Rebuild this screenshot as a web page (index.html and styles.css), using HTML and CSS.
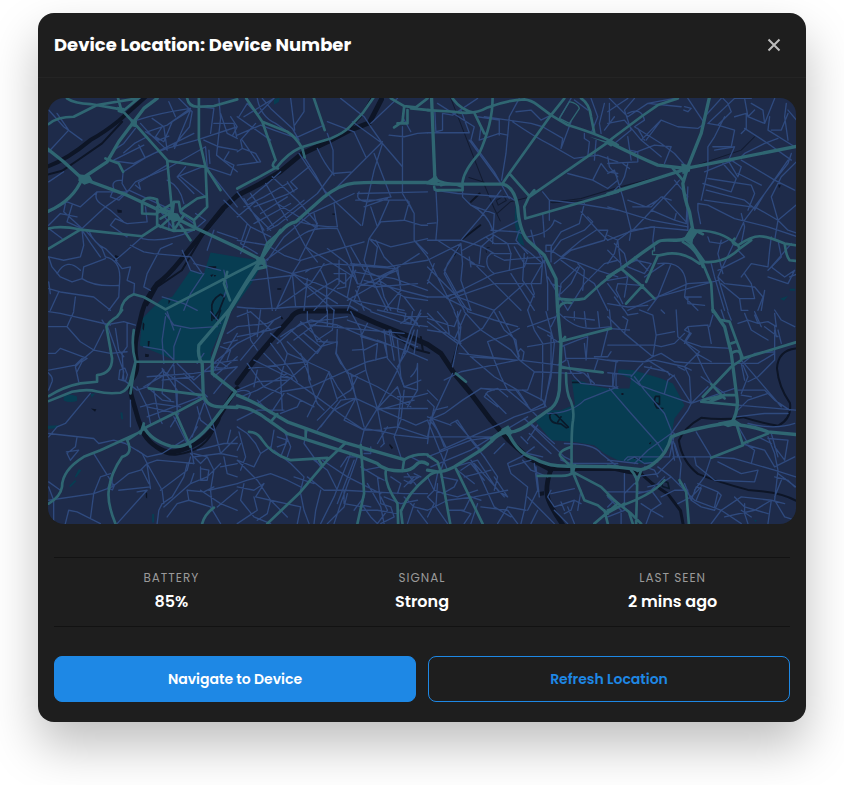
FILE: index.html
```html
<!DOCTYPE html>
<html lang="en">
<head>
<meta charset="utf-8">
<meta name="viewport" content="width=device-width, initial-scale=1">
<title>Device Location</title>
<link rel="stylesheet" href="styles.css">
</head>
<body>
<main class="modal" role="dialog" aria-labelledby="modal-title">
  <header class="modal-header">
    <h1 class="modal-title" id="modal-title">Device Location: Device Number</h1>
    <button class="close" type="button" aria-label="Close">
      <svg viewBox="0 0 16 16" aria-hidden="true"><path d="M2.5 2.5l11 11M13.5 2.5l-11 11"/></svg>
    </button>
  </header>
  <div class="map">
    <svg viewBox="3 3 2241 1278" preserveAspectRatio="xMidYMid slice" role="img" aria-label="Map">
      <!-- Parks -->
      <g class="park">
        <path d="M490 467L570 480 650 492 612 560 555 640 520 700 490 770 494 795 380 788 278 745 285 665 310 639 345 605 375 600 430 520 470 530Z"/>
        <path d="M1572 848L1610 855 1625 864 1680 874H1745L1750 844 1710 829 1712 817 1755 819 1840 844 1875 859 1910 924 1880 964 1870 1019 1860 1059 1830 1089 1800 1101 1710 1089 1670 1069 1640 1044 1575 1034 1510 1029 1465 974 1480 959 1510 939 1540 939 1582 922Z"/>
        <path d="M50 898q20-10 40 0v14q-24 6-40-2zM0 986l42-2-20 10-22 2zM95 1115l8 4-16 22-4-2zM84 1148l4 4-18 18-4-4zM220 946l6 0 2 22-6-4zM680 8l18-6-4 14-14 8zM2196 605l24-8-12 14zM2225 575h16v6h-16zM315 1250h6v26h-6zM130 890l14 0-10 12zM2117 1266l10 4-4 6zM1403 318l8 60 20 70-18-10-12-60z"/>
      </g>
      <!-- Rivers -->
      <g class="river">
        <path class="w14" d="M296 0L215 72Q170 108 130 130 60 188 0 210"/>
        <path class="w8" d="M225 75L165 140 90 192 45 222 0 234"/>
        <path class="w20" d="M1002 8L966 78 908 100 842 134 762 172 697 226 633 264 570 296 528 334 484 388"/>
        <path class="w16" d="M484 388Q440 440 400 490T330 560Q295 605 285 645T268 720 268 790 252 850Q248 880 254 900T274 969L290 1010Q305 1035 330 1050 350 1064 372 1064T430 1048 490 1002 515 959L555 894 570 874"/>
        <path class="w8" d="M530 340L470 410 404 520 330 570 300 625M290 1000Q330 1080 390 1072 480 1060 504 985M972 5L940 60 905 96"/>
        <path class="w20" d="M570 858L622 788 680 719 730 664Q740 646 762 642H905L985 678 1070 712 1140 742 1180 769 1220 829 1270 889 1330 969 1380 1026 1440 1080 1510 1118"/>
        <path class="w14" d="M1510 1115H1700L1740 1124 1780 1130"/>
        <path class="w8" d="M1025 690L1060 728 1100 756 1145 768M1120 720l6 40"/>
        <path class="w12" d="M1780 1130L1812 1158 1860 1190 1898 1240 1906 1282"/>
        <path class="w16" d="M1508 1122Q1495 1160 1498 1190T1545 1282"/>
        <path class="w6" d="M2243 754Q2190 760 2187 814 2192 870 2226 918 2232 965 2190 986 2130 975 2085 960 2030 970 1960 962 1910 990 1893 1030 1902 1092 1950 1130 2010 1154 2100 1178 2200 1184 2243 1210"/>
        <path class="w8" d="M1270 315L1296 290M1240 430L1298 385M1236 445L1220 475M1230 745L1214 800"/>
      </g>
      <g class="rail">
        <path d="M1210 5L1308 258 1340 335 1358 372M1264 242l46 14M1348 350l40-35 50-12M1346 311l22-14 8 14-24 14zM1510 317L1600 305 1710 272 1880 228 2080 160 2120 120M1515 318L1620 310 1712 280M1325 452q-14 0-8 14"/>
        <path class="pond" d="M494 636Q490 610 520 592L532 600 516 640 500 665ZM520 640l-10 30M494 640v30"/>
        <path class="pond" d="M1506 955Q1512 940 1528 955L1562 990 1556 992 1540 980Q1506 980 1506 955ZM1530 975l10-16"/>
        <path class="pond" d="M1835 898h-12q-8 18 4 34l18 2M1835 898v24l-12-6M1575 856h20M1760 1082l20 4"/>
        <path class="pond" d="M1840 1150l20 6 4 18-20-6z"/>
      </g>
      <g class="ink"><path d="M210 338l14 2 0 8-12 0zM205 474l14 6-8 10-12-2zM483 508h24v6h-24zM489 534l10-2-6 8zM499 534l8 0-4 6zM364 608l6 4-6 10zM287 675l5 6-2 20-4-6zM294 770l12 2-2 8-10 0zM132 934l16 2-4 8zM302 732l6 0-2 16-4 0zM296 1184l4 4 0 16-4-4zM1473 1184l16-2v12l-14 2zM1027 1040l10 12-4 4-8-12zM2191 264l8 2-6 8zM1803 1038l8-4-4 8zM1721 888l6 0v6h-6zM690 574l12 0v4h-12zM855 350h8v4h-8zM700 656l8 8-4 4-6-8z"/></g>
      <!-- Streets -->
      <g class="street">
        <!-- north west -->
        <path d="M5 40L50 90 105 130M30 50L65 100 5 165M265 95L230 140 200 160M300 120L262 140 230 168M280 80L315 118 360 160M295 105L335 130 365 118M270 70Q330 50 430 35L360 85 300 105M345 90L325 120 350 135 375 75 430 40 382 155M395 5l40 40-8 45-50 60M365 15L385 60M315 65L350 90 360 160M200 190L290 145M180 190L260 200 320 170 360 155 455 128 570 90M275 145l18 36M470 130L515 150 570 160M490 110L500 35 455 30M520 50L540 110 570 125M550 60l20 30-14 26M515 5l5 60-12 110 62 50M228 225L300 180 440 110M228 225L225 260 240 285M5 255L50 225M225 250Q190 250 200 275L190 300 215 310 245 280 265 255 360 215 475 150 480 210"/>
        <path d="M240 285L150 285Q140 305 160 320L190 340 230 375M265 265l15 12-6-20 90-55M5 345L60 315 100 330 150 285M55 320L50 345 105 395M75 325L60 375 105 395 175 330 245 280 375 340M5 385L40 350 90 360M5 395L45 425M105 400L110 445 100 480 50 490 5 480M105 400Q130 440 160 480M115 400L165 455 175 480M125 400Q140 440 175 455L210 490M295 330L300 375 240 380 205 365 190 385 240 420M285 420L240 460 205 490 225 515 250 510 240 550 262 560 260 590M250 445L290 465 320 470 430 480 465 530M285 425Q350 440 440 400M375 440L340 455 300 530 290 570 310 580"/>
        <path d="M175 480Q220 490 218 545L215 600 185 640M175 485L110 510 105 545Q140 570 215 565M5 480L15 510 40 540 75 555 105 545M30 530Q60 480 100 520M5 575L40 585 140 600 190 640M85 600L80 640M35 585L10 640M5 555L10 590M465 210L390 240 440 290M390 240L415 210M400 240L475 300M360 250Q400 270 410 320M475 210L550 235 560 205 530 190 545 165M475 210L570 330M485 160L488 200M500 80l60 0 8 40M440 380L400 350 415 325M445 350L475 370 440 400M530 310L570 350M500 400L480 460M510 405L570 425"/>
        <path d="M330 330L375 390M350 330L400 370M365 375L365 400M405 460L430 520 460 530M520 520L440 500M530 520L540 570 530 600M470 530L430 590 410 640M345 600L410 620 450 640"/>
        <!-- north centre -->
        <g transform="translate(570 0)">
        <path d="M5 60L30 20 60 55 110 5M75 5L100 35 165 95 185 130M60 5Q70 60 115 80L180 125M160 5L172 100M200 5V45L172 85M0 115L70 85 110 100 180 125M55 80L10 130 15 155 0 165M0 205L70 195 55 170 15 155M0 60L100 130M15 130L60 195M110 5L20 60M310 5L380 60 400 90 435 140 495 210M345 75L435 140M400 80L480 5M435 140L410 220 385 330 375 385M350 105L385 180M270 75L350 105M410 170L460 300M435 135L285 285M240 155Q260 200 290 235M270 110L287 160V230L345 225M260 85L172 125M185 170L215 215 265 285 300 320 370 385M200 180L235 235 265 290M215 210L160 255 180 275 155 290 50 330M150 255L170 285"/>
        <path d="M30 310L85 265 130 225M0 285L40 340 100 400M0 360L60 310M20 305L80 400M40 290L110 390M85 260L150 370M105 240L180 310M70 350L150 300M50 380L160 320M20 330L80 300 150 260M90 395L200 310M90 400L120 385 240 290 285 230M0 350L40 390 100 420M0 430L90 445 140 475 185 490M30 380L10 440 60 470M60 360L90 440M40 390L10 470M120 320L240 395M180 310L240 380M170 385L205 450 240 495M185 375Q240 390 300 390L290 320"/>
        <path d="M85 490L140 450 200 410Q230 390 300 395L320 440 340 490 360 560M360 290L570 285M365 285Q350 310 390 315L460 300M355 310L510 310 530 350V430L570 480M380 330L450 305M495 90V290L530 350M455 115L500 120 540 110 570 108M495 60L520 105M400 330L420 390 455 310M350 290L220 350 140 420 90 490M395 425L430 375 500 370 550 385 570 385M500 370L515 315M395 425L460 450 570 425M395 425L380 490 410 560 450 640M415 430L440 480 475 515 490 560M530 430L570 470M380 435L290 460 190 490M400 430L420 450 410 510"/>
        <path d="M70 500L165 530 290 580 400 640M85 490L105 640M190 490L165 530 115 640M185 490L240 380M165 530L175 630M165 530L290 640M210 545L200 640M240 390L230 350M165 530L280 500 475 515M250 520L268 560V640M305 490V560M40 550L170 535M205 450L350 540M210 600L300 545 320 560 355 520M230 640L305 560M290 530L325 530V570L300 575M270 455L330 500 360 560 420 570M340 450L380 520 425 540 475 515 545 470M350 525L470 545 570 580M340 500L450 510 570 490M360 570L480 520M475 515L400 570 330 610M480 510L490 580 440 640M425 540L440 600 460 640M425 550L500 600 570 610M380 550L570 600M500 600L530 640M490 590L480 640M355 580L380 640M0 630Q80 640 160 630L335 625 360 640M205 560L300 620M220 515L205 525M120 630L220 560 260 500M345 600L330 640M350 500L330 600M390 510L350 610 500 640M410 570L540 560"/>
        </g>
        <!-- north east of centre -->
        <g transform="translate(1140 0)">
        <path d="M0 108H125L100 40M22 45L25 105 45 100V50L75 55 150 5M30 20L140 90 130 130 200 225 245 305M125 130L220 260M160 90L155 130 215 110 240 115 235 170 222 250M150 60L215 70V115M170 60L310 80 345 90 405 125 400 155 430 75M240 120L245 60 275 5M265 45L310 40 340 70 370 55M255 75Q320 120 370 145L440 185 510 175 570 195M430 5L395 65M440 10L480 40M470 110V125L485 135 480 180 465 190M490 110L510 60 490 5M520 110L515 80 530 20M530 100L560 60M545 75L545 20M550 130L570 110M505 130L500 190M520 200L495 250 420 230M520 200L540 225 570 230M540 180L545 210 570 240M495 250L540 275 570 250"/>
        <path d="M25 275L30 370 25 430H0M0 380L25 378M0 430H100L165 450 200 470M100 430L160 360 220 280M105 280L105 300 130 325 200 350 195 440M130 325Q180 350 195 400M30 430L140 500 200 560 280 640M100 440L60 500 50 530 110 640M100 440L105 500 100 550 130 640M100 440L50 520 100 610 120 640M100 440L0 490M105 460L175 420 200 440M130 500L170 510M125 480L130 510M155 500L160 450 200 415 240 440 250 470 190 470 180 480Q170 510 200 530L290 510 300 480M200 440L270 440 310 470 345 500M175 420L275 370M190 400L270 405 285 410M275 400L265 430 300 470M300 420Q370 410 380 370L400 380M345 285L365 310V370M365 310L450 320 570 340M470 320L455 380 400 405 370 450V495M480 360L495 375 470 400 400 430 370 470M355 445h16v18h-16zM370 460L400 480 460 500 510 520 570 540M460 345L510 400 540 430M505 400L460 430 400 480M510 400L540 400 530 430 430 460 380 500M450 500L470 520 465 580M450 510L400 560 390 640M455 510L430 560 400 590M400 490Q440 520 500 560"/>
        <path d="M345 490L320 440 310 400M345 490L340 560 290 560 200 640M350 490L360 560V640M350 490L310 560 320 590 300 640M290 470L285 550 320 600M200 475L230 490 345 480M250 470L245 520M250 530L320 640M20 280L90 290 245 300 260 310M240 300L185 300M0 480L60 600 80 640M0 550L60 605 130 640M0 600L60 600 200 530M70 605L200 560 300 560M20 500L0 560M0 510L90 600 200 640M50 600L110 580M360 540L420 640M370 560L400 570M420 640L470 560 530 500 570 490M500 560L540 640M540 560L570 600M345 350L350 420M260 450L290 500 340 500"/>
        </g>
        <!-- north east -->
        <g transform="translate(1680 0)">
        <path d="M0 45L30 25 60 5M5 5L60 60 120 20 200 5M80 5L50 40 70 100 20 140M60 50Q100 30 110 70L80 90 160 140 200 170 235 210M0 80L50 70 100 130 160 180M100 130L160 70 210 90 270 95 290 80 240 5M120 20L220 30M230 30L250 35 240 45 228 40M160 70L115 130M75 170L140 145 190 150 170 200M0 200L90 195V165L65 160M60 200L50 240 40 260 20 280M65 215L45 200M60 120L70 190M90 95L110 130M0 230L20 220 45 300 70 400 65 430M0 330L130 370 240 390M0 430L65 405 130 390 240 400M75 330L130 330 160 300 190 310M200 250L240 300M60 310L115 330 150 310M130 340L200 370 235 380M205 350L200 370M215 250L160 310 75 400M165 300L235 375M300 80L330 85 380 100 370 150 315 150M330 85L370 45 360 20 345 5M350 60L320 120 300 150V220L280 310M380 60L415 50V95L400 110M410 5L420 60 470 80 465 40 430 20M420 60L440 40M500 5L470 80M485 60L480 100 560 150M410 95L480 140 550 190M290 60L340 5M300 80L380 5 430 5M490 100H520L540 50M535 20L530 60 540 130M540 40L570 75"/>
        <path d="M550 170L540 200 500 250 410 370 330 540M540 190L470 290 440 340M400 190L500 250 560 280M400 180L410 170 470 140 510 125M360 190L390 240 400 210 370 190M360 195L380 150 320 160M345 200L385 245 370 285 285 260M390 230L460 265M300 245L430 265 440 290 420 340M295 280L410 310 440 335M290 310L430 330M270 320L300 325 350 350 380 365 480 390 570 420M270 320V340L278 380M400 350L410 390 400 440M440 330L510 370 570 320M510 370L490 300 520 240 570 190M510 370L500 430 530 440M510 370L540 400 570 410M400 180L290 225M490 420L485 460 480 510 430 500 400 540M550 440L490 510 530 540 560 520 540 560 480 540M330 540L350 560 440 570 465 600 450 640M330 540L360 640M430 560L440 605 395 605 340 560M395 605L400 640 420 640M470 580L460 640M330 550L150 600 60 640M310 500L320 540 350 640M340 430L330 470 345 530M300 420L305 435 340 440 360 430M330 520L410 480 390 460"/>
        <path d="M0 415L30 430 20 470 0 500M30 430L70 400M30 430L40 510 60 540 50 600M0 460L40 500M70 400L140 390 135 430 140 460M20 440L50 470 60 510 110 530 130 500 85 490 40 510M80 480L120 520M150 500Q230 490 235 560L230 600 270 640M190 500L150 600M170 500L110 540M60 540L0 550M100 565L30 560 25 580 45 620M150 600L120 640M150 600L240 560 310 555M230 600L280 600M240 600L240 620 290 625M20 600L50 640M0 620L60 630 120 625M510 430L520 480 480 520M545 540L570 530M235 380L240 270M410 530L430 560M240 400V340"/>
        </g>
        <!-- south west -->
        <g transform="translate(0 639)">
        <path d="M5 5L40 10 190 45M80 5L60 50 5 50M60 50L100 95 140 120 170 60M140 120L190 130 240 125M5 130L25 130 40 115 80 130 120 145 105 155M105 145L85 165 5 180M140 120L105 150 85 170 95 215M0 185Q20 200 15 215L5 240M165 30L175 45 230 35 265 45M240 40V110L225 130 230 210 250 225M205 55L215 120 230 140M105 155L90 185M180 45L230 185 225 210M218 180l15-6 8 20-6 20-20-6zM130 250L55 340 30 350 5 380M5 370L140 385 155 400 200 390 235 400M90 380L85 410 60 430M58 425L95 420 70 450 60 430M140 430L190 510M235 400L285 430 300 460 345 540 350 580M300 460L280 480 245 490 195 530 140 550 5 570M300 460L330 450 390 455 440 460M195 500V530M190 515l12 10-6 14-14-6zM5 515L40 540M5 530L20 570V640M140 550L130 625M55 640L65 600 90 605 160 640M140 550L160 500 190 490M310 530L215 540M270 545L300 540 210 640M300 465L310 535M285 480L305 520M340 540L420 480 430 440M345 580L335 600 330 640M345 580L375 560 410 500 420 460M350 590L430 520 440 490M420 540L425 570 490 590 520 640M425 570L390 580 360 620"/>
        <path d="M250 225L270 240 300 230 350 180M270 230L300 290 390 310M280 290L320 280 400 290M300 290L310 340M300 230L345 270 380 275M320 240L335 320 345 340M345 175L390 240 390 310M350 180L345 250 370 270M380 165L390 300M390 160L440 210 570 100M345 210L440 200M300 200L440 190 570 170M380 160L360 190 290 230M410 190L480 260M450 160L470 130M290 110L350 120 380 150M355 20L345 90 350 160M355 10L380 45 430 55 510 50M400 55L380 110 380 150M360 5L380 60M490 5L520 40M300 320L460 260M345 180L470 270 500 350M380 320L420 400 450 350M450 290L460 330 500 360M470 280L435 380M395 310L370 350M430 400L440 460M410 390L345 430 300 440 270 420M250 270L250 350M440 440L520 430 570 380M450 420L530 400 570 400M500 350L520 430 570 440M500 250L540 200 570 170M495 190L540 120 570 70M500 200L570 140M510 150L540 170M500 160L570 150M495 170Q540 180 570 170M520 110L550 120 540 150M540 70L570 50M530 100L570 90M430 430L460 460 480 440 440 430M460 470V510H480L485 480 460 475M480 440L500 480 490 540 495 590M485 540L570 520M430 520L480 500 520 460M530 440L540 490 570 500M540 400L550 360M460 540L520 580 570 600M510 590L570 540M420 540L470 545 500 530M520 470L570 460"/>
        </g>
        <!-- south centre -->
        <g transform="translate(570 639)">
        <path d="M0 80L100 60 130 50M0 50L90 40 130 20M30 0L40 90 60 120M0 20L40 5 100 60M70 0L60 80M0 100L80 60M10 150L110 30M100 70L130 95 150 130 210 155 275 185 300 230 325 265M120 100L190 40 330 20M130 80L160 60 220 30 300 45 370 75M160 60L240 130 260 100 190 35M150 95L210 155 270 90M170 90L270 15M200 70L250 110 300 95M245 95L300 97 295 130 310 160M300 50L297 130 330 190M290 0L285 60 240 90M210 5L210 30 240 95M270 0V50M345 120L380 118M340 5L370 60 385 180 400 230 420 295M370 75L500 120 570 150M330 30L420 60 540 110M390 40L370 80 440 100 450 140 390 155 310 190 220 230 130 245M220 45L500 70M380 120L420 100 415 150M420 90L470 110 460 60M440 60L450 145 480 180 500 230 540 240M455 60L470 150M500 130L520 60 550 10M520 60L480 180 420 295M530 60L510 120 480 170M540 60L530 130M550 0L520 60M400 5L500 40 570 50M420 0L510 20 540 40M480 5L505 10 500 35 520 40 525 5M500 20L570 20M490 40L520 20 545 50"/>
        <path d="M50 150L160 205 210 240 320 320 380 360M30 160L80 230 130 250M0 240L60 215 150 210M35 175L210 155M210 155L215 210 240 280 260 300M150 130L130 200 135 300M130 200L165 205M210 160L130 230 60 280M150 190L60 240 10 260M60 180L50 230M0 245Q30 235 40 250L30 270M80 130L130 180 170 200M275 185L240 260 210 320M275 190L300 270 240 330M310 160L335 190 420 230 520 290M330 185L355 260 380 350M340 190L355 265M350 265L310 270 250 350M355 265L290 300 240 360M355 265L320 330 380 360 370 400M355 265L420 295 535 345 570 330M420 295L480 230 490 260 480 350M420 295L440 400M420 295L380 360 430 360M415 295L570 295M420 300L530 270M360 200L340 240 300 265M385 180L345 200M480 90L490 200 500 230 550 210M500 240L490 330 470 380 490 440M480 260L530 260 570 250M540 160V240L510 290M440 355L480 350 570 380M380 355L440 365 480 375 570 385M520 200Q540 180 540 160M190 130L220 210M150 250L230 290M100 100L160 180 180 215M130 310L180 290 190 270"/>
        <path d="M0 330L60 300 140 300M60 270L100 310 140 250M0 350L30 370 55 400 70 430M5 365L25 440 10 480M100 410L70 430 50 470 0 450M110 360L100 420 130 440 150 390 120 380M150 370L145 400 120 410M140 360L160 410 150 440M110 420L160 460 200 500 190 540M0 520L30 510 100 490 150 510 190 530M0 450L60 510 100 570 150 620M0 530L50 540 80 520M20 520L10 570 50 620 100 640M50 560L60 600 0 640M100 570L90 610 60 630M80 520L55 560 100 570 190 590 180 640M190 550L200 600 215 640M170 500L230 520M210 500L260 540 320 540 500 550 570 550M255 450L330 500 430 550M250 540L235 600 230 640M270 640L320 590 330 550M320 540L320 580 375 590M310 470L330 440 370 440M340 430L290 560 250 640M350 450L300 580M360 440L310 580 290 640M300 540L270 480 230 450M210 360L200 400 250 470M380 430L400 430V410M380 420L440 430 480 440M440 400L430 410M450 350L420 400M370 470L420 500 440 510M380 480L430 470M380 560L350 600M390 520L430 590 440 640M400 590L375 585 400 620 420 640M420 500L430 580 460 590 470 620 430 640M440 560L490 580 540 570M460 500L490 520 480 550M500 500L540 500 520 520 500 510M510 520L545 500M500 530L530 500M510 490L540 530M530 490L550 500M520 440L560 460M500 560L530 590 570 600M530 580L510 640M540 600L570 640M370 600L420 600 480 610M420 640L450 600 430 560M10 400L0 420"/>
        </g>
        <!-- south east of centre -->
        <g transform="translate(1140 639)">
        <path d="M0 35L90 100M0 10L60 70 100 100M90 5L95 100M30 5L60 40 65 70 0 60M0 25L80 50 100 0M80 5L100 50 95 100 130 140 200 200 270 240 300 285M110 5L160 60 250 120 275 150M115 10L80 90M120 5L200 30 270 50M215 5L260 90 275 150M200 5L230 60 265 90 270 130M165 55L90 100 75 170M165 55L200 0M270 150L100 185 50 210M275 150L320 185 300 240 265 240 160 235M275 150L395 165 470 190M275 140l-4-14 8-10 10 10-4 24M265 150L95 130M180 95L240 75 275 55M180 95L200 150 220 200 240 240M300 0L320 60 345 100V200L340 270M330 50L370 70V180L350 290M355 5L380 100 370 200 350 280M300 50L385 20M395 0L370 50M360 75L390 95M130 140L270 150M300 110L390 95M320 185L430 190M390 165L415 150 410 110M390 5Q440 60 500 55L550 50M410 20L500 30M440 5V30M470 5L475 50M510 5L515 50M545 0L550 50M400 110L450 90 480 80 475 150M415 145H500L570 155M470 100L475 145M540 60L520 140M550 125L540 140H500M420 150L430 190 460 190M430 185L440 200 460 220 560 230M470 190L500 220M500 180L510 150M480 190L490 220M565 155L555 230 570 235"/>
        <path d="M0 270L20 290 0 380M0 240L30 270M10 320L0 400M10 330L75 190M5 330L50 310 105 270 160 235 200 240M15 330L60 420M70 340L90 330 130 390 170 440M85 335L160 420M20 300L60 290M0 320L70 345M0 380L200 380M5 330Q30 350 50 410M0 330L60 480M0 440L130 390 200 380M40 420L220 340 260 320 350 290M10 470L130 420 210 370M60 420L40 480M175 250L235 310M180 245L170 260 210 290M180 245L210 235 240 260M240 240L300 290 330 320M265 240L310 300 350 280M285 240L345 270 355 290M290 325L410 440 430 450M200 380L300 320M330 345L300 390M310 340L380 400M280 380L300 400M305 370L370 430M320 410L280 440 240 460M360 310Q430 310 470 270 520 250 570 230M300 430L345 440M285 450L310 480 360 500M240 460L250 490 300 530 290 600 280 640M245 470L310 450M320 460L330 540 300 600M325 470L335 560M400 440V450L430 460H570"/>
        <path d="M80 470L150 450 210 540 240 560M100 480L130 460 170 510M90 480L140 520M110 500L190 480M130 450L150 480 200 590 250 620M140 460L230 560M0 500L20 540 0 560M30 490L20 540 50 550 90 560 150 540M40 500L90 510 80 530 45 550M0 560L20 580 0 620M30 520L25 590 60 640M0 600L60 570 140 560 240 540M60 600L110 600M100 600L130 610 110 640M110 600L130 560 160 570M150 580L130 640M160 590L240 600 270 640M200 500L240 560M230 400L200 430M170 440L210 500 200 540M210 640L240 590 295 600M370 540L360 560 380 590 440 570 460 580M370 550L440 535M400 575L410 600M380 600L420 640M420 590L440 640M440 570L430 600 410 610M460 540L450 600M310 640L330 600M300 560L340 600 380 640M410 400Q500 400 520 430L570 470"/>
        </g>
        <!-- south east -->
        <g transform="translate(1680 639)">
        <path d="M0 20L40 60 50 70 135 140 110 155M45 20L60 30 50 70M50 0L60 15 90 10M95 0L135 15 145 75 135 140M0 105L140 105 160 110 200 100 230 70M205 0L210 80 230 95 245 70 240 50 300 45M235 100L265 130 310 155M235 95L280 110 370 115M230 100L250 70 230 60 240 50M145 75L200 65M65 60L0 55M160 0L170 10M230 95L275 125 230 170M0 150L110 155M265 130L290 185 310 220M110 155L140 150 230 170 245 200 250 280M135 140L160 130 200 155 260 160 380 160M120 150L200 200 250 280 300 230M230 180L210 170M230 170L250 180M110 170L180 185 185 195M130 170L90 220M0 188L70 195M15 190V230M25 190V235M70 200L95 170 105 160M70 205L95 225 135 240 250 280M80 200L110 240 170 310 190 360M5 235L70 310 150 400 170 430M170 250L180 210 200 195M250 280L240 300 190 370M250 280L380 235M190 365L200 370 185 440 60 440 50 450M190 370L120 420 80 460M190 370L210 440M300 45L310 100M305 50L315 15M360 5L370 30M340 0L350 30M410 10L430 60 480 90M390 40L420 30 450 40 480 35 505 50 500 10M440 5L460 50M450 40L440 15M500 0L520 30 560 50M510 60L520 100M470 50L510 80M500 50L505 80M400 150L520 290M410 155L440 130 500 125M400 160L410 210M405 165L420 200 400 250M500 60L500 150 450 200 420 215M380 160L450 160 500 130M280 200L350 250M390 240H470L500 270 545 300M390 285L450 290 563 300M390 300L420 270 480 250M385 320L470 310 540 310M400 255L430 260"/>
        <path d="M265 365L310 440M380 330L420 400M420 340Q500 360 560 340M310 440L380 445 500 480 563 500M310 440L290 500 260 540M260 440L265 465 320 510 440 515 450 480 400 490 330 455M400 400L470 420 500 470M410 400L440 420 430 460M480 380L500 430 510 480 500 570M490 370L510 440M500 410L530 450 540 390 480 385M450 380L490 400M500 470L560 440M510 490L563 530M520 510L500 560M500 500L540 510 560 530M200 400L220 460 215 520M190 390L200 450M200 440L150 490 80 500M195 440L310 440M150 470L190 500 230 540 260 570 340 600 400 640M190 500L160 520 120 530M0 545L120 545M50 490V600L0 620M80 520L50 550M90 550L130 540 170 500M100 580L130 600 115 640M130 540L160 580 130 600M160 560L200 540 240 540M165 620L130 600M210 580L250 560 280 530M270 520L330 545 340 555 320 600M250 570L265 530 280 535 265 570M320 600L280 590 250 570M330 545L320 590M340 600L400 560 490 570 530 580M340 600L310 640M350 620L440 600 490 570M410 580V610L420 640M380 560L410 590 480 610M490 570L480 640M500 570L530 620 563 630M400 600L430 620M230 520L250 570M60 450L80 440 110 460 150 455M90 460L0 450M110 470L140 480 150 500M0 560L40 600 40 640M20 570L0 590"/>
        </g>
      </g>
      <!-- Main roads -->
      <g class="road">
        <path class="bold" d="M0 155L50 195 105 245 180 195 215 135 260 75 290 35 330 5M105 245Q80 310 0 345M105 245L240 295 375 358 445 393 570 452 640 488 700 400"/>
        <path d="M5 82Q30 60 80 60L150 25 270 5M60 5Q80 20 130 22L222 38 260 78 360 190 375 345M213 5l9 32M280 0L225 45M360 192L475 210 520 280M455 0V125L475 210 480 330 440 370 445 393M420 5Q425 30 450 30L500 28 570 8M5 395Q40 385 100 398L285 418 335 385M5 455L100 398M175 185L215 200 228 225M375 345Q330 340 330 308 300 295 285 315L285 350 325 352 375 320M330 330L330 385 380 402 440 398M375 358L380 315 395 315 400 345 440 370M375 358L340 390M375 358L380 400 410 355M400 385L430 430M375 345L340 365M400 340L450 305 478 298"/>
        <path d="M220 645Q225 605 260 592L290 600 355 637 570 525 640 490M540 525L530 560 548 610M570 275L640 238 690 210Q720 170 760 152L850 125Q890 108 905 92L945 50 980 0M597 5L645 75 685 190Q665 210 692 215M645 75L720 105Q745 120 765 155M798 0L832 100M765 155L772 182"/>
        <path class="bold" d="M545 645L640 490 660 440 700 405Q720 380 745 375L830 300Q880 262 920 259T1000 257H1140M640 488L600 550 545 640M645 495L655 510 630 515M570 600L630 512"/>
        <path d="M1030 5L1070 28 1105 32 1140 5M1070 30L1065 75 1040 92M1080 40V80L1050 80M1090 35L1145 40"/>
        <g transform="translate(1140 0)">
          <path class="bold" d="M12 0L22 245 0 258M0 258L30 262 110 262 225 262Q260 270 270 330 275 400 300 430L350 475 385 545 390 645"/>
          <path d="M22 245Q40 260 100 265M30 280H105V255M20 270Q20 285 40 280M40 265Q70 255 100 268M0 40L80 45Q140 56 180 32 240 10 290 8 310 10 330 25L370 55 420 85Q520 115 570 145M75 5Q100 40 140 48L170 110M195 5Q195 80 155 170 110 220 105 255M410 5L370 55 245 230 225 260M245 230L305 298 290 330 293 365 570 285M305 300L550 130M460 5Q485 20 490 60L500 110M305 298L320 280"/>
          <path class="lane" d="M425 15Q450 20 455 35L425 80 395 65Z"/>
          <path d="M390 605Q440 612 470 605L520 560 570 520M390 640Q400 610 430 618"/>
        </g>
        <g transform="translate(1680 0)">
          <path class="bold" d="M0 135Q90 180 150 205L235 215 570 148M0 292L240 215M305 0L280 110 240 210 225 260Q230 310 245 345L255 400Q245 432 200 430T150 435L100 470 40 515 0 540"/>
          <path d="M0 135L100 60 150 25 210 5M225 250L195 215M255 400Q330 400 370 430L390 445Q430 418 455 418T530 440L563 445M380 425Q365 440 390 445L395 455M530 440Q535 480 545 490L563 492M290 495Q350 500 395 455L430 430M235 430Q265 450 285 500L310 560 315 645M225 435Q270 460 285 510M255 400L250 440 290 495M260 400L285 412M275 500Q230 465 180 470L150 476L115 555M40 515L100 565 140 605M105 565L55 620"/>
          <path class="lane" d="M140 450V462H134V473H160"/>
        </g>
        <g transform="translate(0 639)">
          <path d="M225 0L210 20Q185 35 178 50L195 145Q195 190 150 195V215L100 220Q50 230 5 258M5 273L75 245Q120 236 150 244T220 248Q245 240 250 210L265 155Q252 110 260 60M265 155Q380 155 495 155M265 155L250 250M305 235L465 255M5 580Q40 560 45 530 45 480 110 440L160 420 270 370 300 350 385 308 465 265M205 640Q180 580 185 540 190 490 225 440 260 430 240 390L270 370M385 308L430 410M290 340L280 370M465 640Q472 612 500 592"/>
          <path class="bold" d="M545 0L455 105Q450 140 465 160L468 250Q475 290 520 290L570 292M548 0L495 150V190L565 245 500 330Q430 420 370 408 310 390 290 350"/>
        </g>
        <g transform="translate(570 639)">
          <path class="bold" d="M0 288Q50 295 90 328L150 370 370 440 420 460Q440 482 495 482 520 482 535 465T570 462M0 255Q50 275 90 300L150 335 325 398 500 448"/>
          <path d="M35 365Q60 365 75 390 100 430 160 450L270 443M325 398L270 450 185 550 90 640M370 405L375 470 380 550 360 640M500 448L495 482M500 448Q530 430 570 433M120 312L100 335M205 360L205 385M245 450L255 465M445 482Q440 520 480 580L482 640M490 600L495 640M570 500Q510 550 492 600"/>
        </g>
        <g transform="translate(1140 639)">
          <path class="bold" d="M390 0L400 100 395 240Q390 280 370 295L320 330Q270 370 240 365 210 370 190 395L160 420 80 470Q50 485 30 485L0 480M240 365Q270 430 320 445 360 470 430 468L570 470"/>
          <path d="M0 435L30 455 40 485 68 640M0 500Q15 485 35 485M85 475L165 640M395 95L550 55M400 95l12-14M400 172L525 187M415 190Q415 250 430 275 440 300 436 330 430 360 432 490M432 410Q385 425 400 440L430 470M330 497H400Q430 497 435 485L520 530 570 580M435 485L470 570 510 585 540 610M570 580L500 640M530 600L540 640M85 190L115 215M190 385L235 355"/>
        </g>
        <g transform="translate(1680 639)">
          <path class="bold" d="M0 468L100 478Q120 475 140 458 178 430 190 380 250 355 350 340 430 345 480 365L563 373M315 0L350 50 370 130 388 270Q390 310 370 340"/>
          <path d="M340 30L365 35 405 145 563 97M370 100L385 95M370 130Q400 110 400 150L370 170 285 260M280 275L390 285M285 270L350 255 385 255M310 222L350 265M345 260L305 275M385 340L405 405 310 443M405 400L480 370M70 480Q90 500 88 530L85 640M100 480Q90 510 85 520M170 510Q130 560 0 600M0 555L70 610 100 640M0 608L50 580M215 510L235 545 243 640M65 610L75 640"/>
        </g>
      </g>
      <!-- Interchanges -->
      <path class="hub" d="M95 232L128 236 138 254 112 264 94 252ZM362 345L392 350 402 366 380 376 362 364ZM1158 238L1168 238 1174 254 1160 266 1146 256ZM1360 996L1382 984 1396 1006 1384 1020ZM1900 200L1928 206 1926 224 1904 232ZM1928 392L1952 402 1930 436 1906 428ZM210 30L232 34 226 50 212 46ZM250 66L270 72 268 92 252 88ZM625 478L652 484 656 500 630 506ZM1625 120L1700 140 1690 150 1672 138ZM2010 976L2060 966 2080 980 2040 990ZM1560 1104L1586 1100 1580 1126ZM1746 1112L1790 1112 1770 1126Z"/>
    </svg>
  </div>
  <dl class="stats">
    <div class="stat"><dt>BATTERY</dt><dd>85%</dd></div>
    <div class="stat"><dt>SIGNAL</dt><dd>Strong</dd></div>
    <div class="stat"><dt>LAST SEEN</dt><dd>2 mins ago</dd></div>
  </dl>
  <div class="actions">
    <button class="button primary" type="button">Navigate to Device</button>
    <button class="button outline" type="button">Refresh Location</button>
  </div>
</main>
</body>
</html>
```
FILE: styles.css
```css
* {
  box-sizing: border-box;
}

body {
  margin: 0;
  padding: 13px 38px 63px;
  background: #fff;
  color: #fff;
  font-family: Poppins, Inter, "Open Sans", sans-serif;
}

.modal {
  padding-bottom: 20px;
  border-radius: 16px;
  background: #1e1e1e;
  box-shadow: 0 24px 48px rgba(0, 0, 0, 0.25);
}

.modal-header {
  display: flex;
  align-items: center;
  justify-content: space-between;
  padding: 16px;
  border-bottom: 1px solid #242424;
}

.modal-title {
  margin: 0;
  font-size: 18px;
  font-weight: 700;
  line-height: 32px;
}

.close {
  display: flex;
  align-items: center;
  justify-content: center;
  width: 32px;
  height: 32px;
  padding: 0;
  border: 0;
  background: none;
  color: #bdbdbd;
}

.close svg {
  width: 16px;
  height: 16px;
  fill: none;
  stroke: currentColor;
  stroke-width: 2;
}

.map {
  margin: 20px 10px 33px;
  aspect-ratio: 748 / 426;
  overflow: hidden;
  border-radius: 16px;
  background: #1e2b4a;
}

.map svg {
  display: block;
  width: 100%;
  height: 100%;
}

.park {
  fill: #073d52;
}

.river,
.rail,
.street,
.road {
  fill: none;
  stroke-linejoin: round;
  stroke-linecap: round;
}

.river {
  stroke: #0d1526;
}

.w6 { stroke-width: 6; }
.w8 { stroke-width: 6; }
.w12 { stroke-width: 9; }
.w14 { stroke-width: 12; }
.w16 { stroke-width: 14; }
.w20 { stroke-width: 15; }

.rail {
  stroke: #121b30;
  stroke-width: 3;
}

.pond {
  stroke: #0a1a2b;
  stroke-width: 5;
}

.ink {
  fill: #0d1526;
}

.street {
  stroke: #2f4a7e;
  stroke-width: 4;
}

.road {
  stroke: #2f6672;
  stroke-width: 8;
}

.bold {
  stroke-width: 10;
}

.lane {
  stroke-width: 4;
}

.hub {
  fill: #2f6672;
}

.stats {
  display: grid;
  grid-template-columns: repeat(3, 1fr);
  gap: 16px;
  margin: 0 16px;
  padding: 12px 0;
  border-top: 1px solid #121212;
  border-bottom: 1px solid #121212;
  text-align: center;
}

.stat dt {
  color: #9a9a9a;
  font-size: 12px;
  letter-spacing: 1px;
  line-height: 16px;
}

.stat dd {
  margin: 4px 0 0;
  font-size: 16px;
  font-weight: 600;
  line-height: 24px;
}

.actions {
  display: grid;
  grid-template-columns: 1fr 1fr;
  gap: 12px;
  margin: 29px 16px 0;
}

.button {
  padding: 12px;
  border: 1px solid #1e88e5;
  border-radius: 8px;
  font: inherit;
  font-size: 14px;
  font-weight: 600;
  line-height: 20px;
}

.primary {
  background: #1e88e5;
  color: #fff;
}

.outline {
  background: transparent;
  color: #1e88e5;
}
```
